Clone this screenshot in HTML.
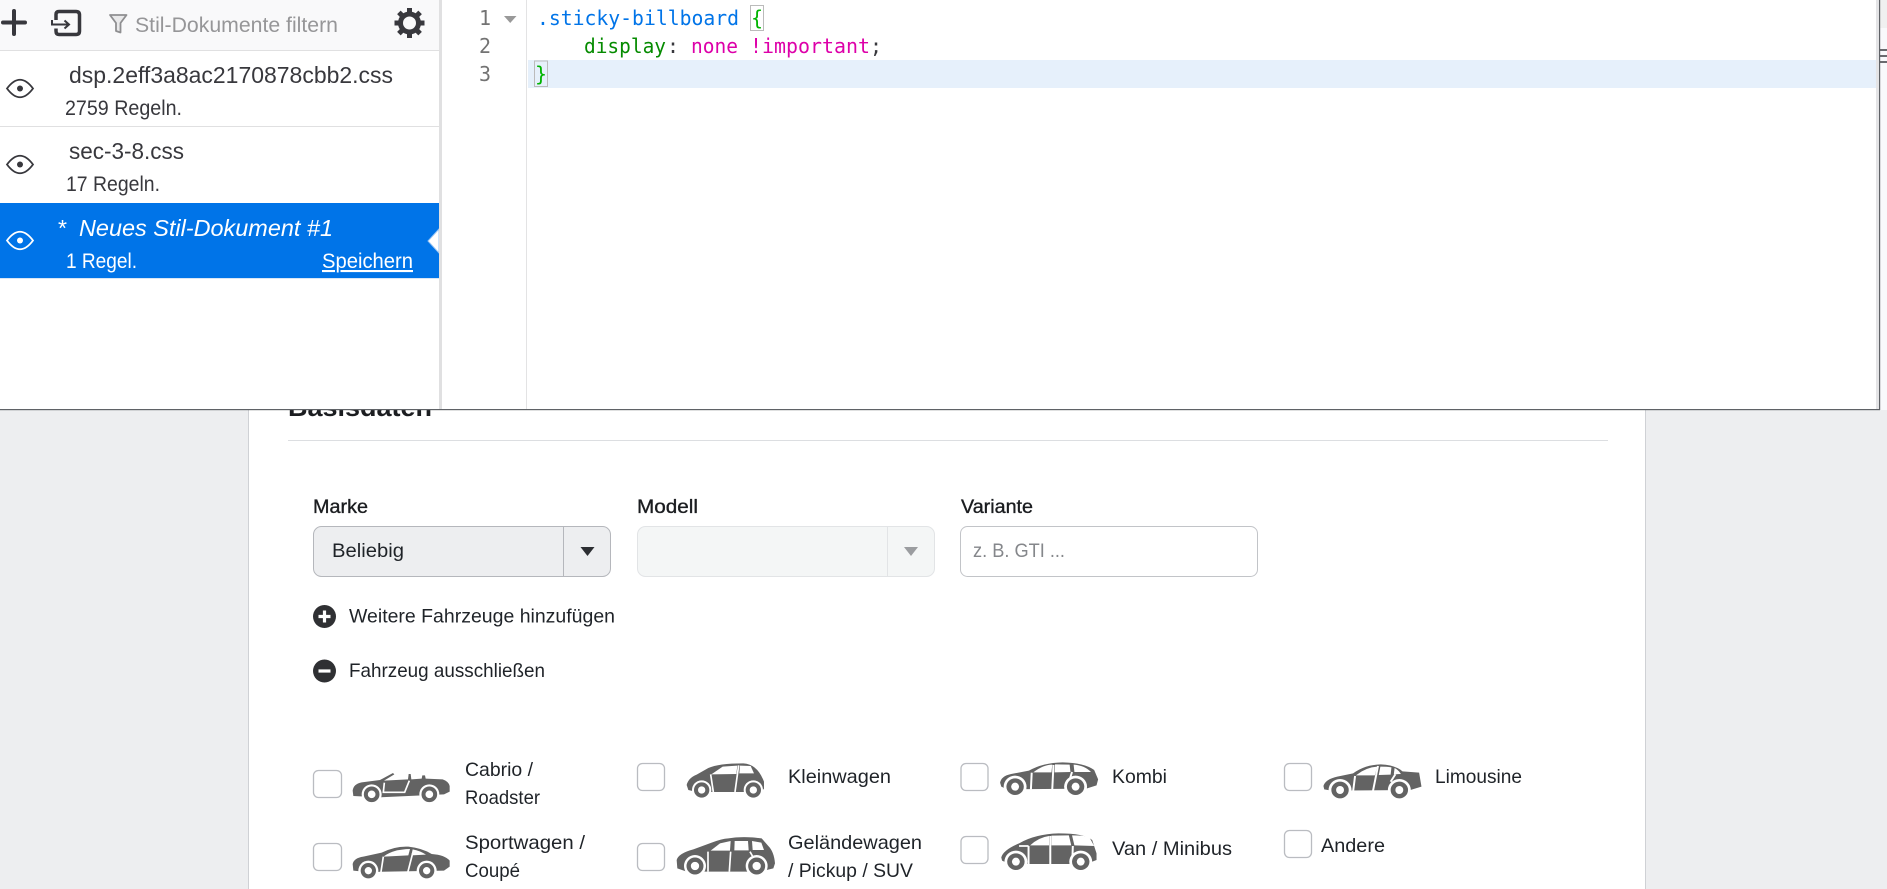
<!DOCTYPE html>
<html lang="de">
<head>
<meta charset="utf-8">
<title>Stil-Bearbeitung</title>
<style>
html,body{margin:0;padding:0;width:1887px;height:889px;overflow:hidden;background:#edeef0}
svg{display:block;position:absolute;left:0;top:0}
text{font-family:"Liberation Sans",sans-serif}
text.m{font-family:"DejaVu Sans Mono","Liberation Mono",monospace;font-size:20px}
.s{font-size:19.5px;fill:#1f2328}
.l{font-size:19px;fill:#1b1d20;stroke:#1b1d20;stroke-width:.35}
.u{font-size:23px;fill:#38383d}
.r{font-size:21px;fill:#38383d}
.b{fill:#636363}
.w{fill:#fff}
</style>
</head>
<body>
<svg width="1887" height="889" viewBox="0 0 1887 889" xmlns="http://www.w3.org/2000/svg">
<!-- page -->
<rect x="0" y="0" width="1887" height="889" fill="#edeef0"/>
<rect x="248" y="0" width="1398" height="889" fill="#fff"/>
<rect x="248" y="0" width="1" height="889" fill="#cfd1d5"/>
<rect x="1645" y="0" width="1" height="889" fill="#cfd1d5"/>
<text x="288" y="416" font-size="26" font-weight="700" fill="#1b1d20" textLength="144" lengthAdjust="spacingAndGlyphs">Basisdaten</text>
<rect x="288" y="440" width="1320" height="1" fill="#dcdee1"/>

<text class="l" x="313" y="513" textLength="55" lengthAdjust="spacingAndGlyphs">Marke</text>
<text class="l" x="637" y="513" textLength="61" lengthAdjust="spacingAndGlyphs">Modell</text>
<text class="l" x="961" y="513" textLength="72" lengthAdjust="spacingAndGlyphs">Variante</text>

<rect x="313.5" y="526.5" width="297" height="50" rx="8" fill="#edeef0" stroke="#b5b7bc"/>
<rect x="563" y="527" width="1" height="49" fill="#b5b7bc"/>
<path d="M580.5 547H594.5L587.5 556Z" fill="#2c2e32"/>
<text class="s" x="332" y="557" textLength="72" lengthAdjust="spacingAndGlyphs" fill="#2a2c30">Beliebig</text>

<rect x="637.5" y="526.5" width="297" height="50" rx="8" fill="#f4f6f6" stroke="#e2e4e6"/>
<rect x="887" y="527" width="1" height="49" fill="#e2e4e6"/>
<path d="M904 547H918L911 556Z" fill="#9b9da0"/>

<rect x="960.5" y="526.5" width="297" height="50" rx="7" fill="#fff" stroke="#c2c4c8"/>
<text x="973" y="557" font-size="19.500" fill="#85878b" textLength="92" lengthAdjust="spacingAndGlyphs">z. B. GTI ...</text>

<circle cx="324.5" cy="616.5" r="11.5" fill="#2f3033"/>
<path d="M324.5 610.5V622.5M318.5 616.5H330.5" stroke="#fff" stroke-width="3.2" fill="none"/>
<text class="s" x="349" y="622.5" textLength="266" lengthAdjust="spacingAndGlyphs">Weitere Fahrzeuge hinzufügen</text>
<circle cx="324.5" cy="671" r="11.5" fill="#2f3033"/>
<path d="M318.5 671H330.5" stroke="#fff" stroke-width="3.2" fill="none"/>
<text class="s" x="349" y="677" textLength="196" lengthAdjust="spacingAndGlyphs">Fahrzeug ausschließen</text>

<!-- checkboxes -->
<g fill="#fff" stroke="#babcc1" stroke-width="1.3">
<rect x="313.5" y="770.5" width="28" height="27" rx="5"/>
<rect x="313.5" y="843.5" width="28" height="27" rx="5"/>
<rect x="637.5" y="763.5" width="27" height="27" rx="5"/>
<rect x="637.5" y="843.5" width="27" height="27" rx="5"/>
<rect x="961" y="763.5" width="27" height="27" rx="5"/>
<rect x="961" y="836.5" width="27" height="27" rx="5"/>
<rect x="1284.5" y="763.5" width="27" height="27" rx="5"/>
<rect x="1284.5" y="830.5" width="27" height="27" rx="5"/>
</g>

<!-- cars in first zoom coordinates -->
<g transform="translate(300 740) scale(.33333)">
 <!-- Cabrio -->
 <path class="b" d="M158 152Q160 132 185 127L240 120L279 99L283 103L252 122L324 118L326 102L332 102L334 118L365 116L367 106L375 106L377 116L428 118Q446 124 449 138L449 155L432 163L240 172L160 168Z"/>
 <path d="M253 128L250 157L314 157L328 122" fill="none" stroke="#fff" stroke-width="5"/>
 <circle cx="215" cy="163" r="30" fill="#fff"/><circle cx="215" cy="163" r="17.500" fill="#fff" stroke="#636363" stroke-width="12"/>
 <circle cx="388" cy="163" r="30" fill="#fff"/><circle cx="388" cy="163" r="17.500" fill="#fff" stroke="#636363" stroke-width="12"/>
 <!-- Sportwagen -->
 <path class="b" d="M158 372Q162 354 190 350L245 338Q285 318 325 320Q365 324 395 342Q435 345 449 362L449 380L432 392L200 396L160 392Z"/>
 <path d="M253 348Q280 328 330 327L325 346L252 350Z" fill="#fff"/>
 <path d="M338 328Q360 332 378 344L334 346Z" fill="#fff"/>
 <path d="M250 350L242 402M338 340L322 402" fill="none" stroke="#fff" stroke-width="5"/>
 <circle cx="205" cy="392" r="30" fill="#fff"/><circle cx="205" cy="392" r="17" fill="#fff" stroke="#636363" stroke-width="12"/>
 <circle cx="380" cy="392" r="30" fill="#fff"/><circle cx="380" cy="392" r="17" fill="#fff" stroke="#636363" stroke-width="12"/>
 <!-- Kleinwagen -->
 <path class="b" d="M1160 135Q1165 114 1190 104L1225 84Q1255 70 1330 70Q1372 72 1392 125L1392 146Q1385 156 1370 156L1190 156L1165 150Z"/>
 <path d="M1234 103L1268 80L1312 77L1309 102Z" fill="#fff"/>
 <path d="M1320 77L1352 78L1362 100L1318 100Z" fill="#fff"/>
 <path d="M1232 103L1240 156M1316 76L1305 156" fill="none" stroke="#fff" stroke-width="5"/>
 <circle cx="1205" cy="150" r="29" fill="#fff"/><circle cx="1205" cy="150" r="17" fill="#fff" stroke="#636363" stroke-width="12"/>
 <circle cx="1360" cy="150" r="29" fill="#fff"/><circle cx="1360" cy="150" r="17" fill="#fff" stroke="#636363" stroke-width="12"/>
 <!-- Gelaendewagen -->
 <path class="b" d="M1130 360Q1135 340 1180 328L1235 308Q1265 296 1285 295Q1330 288 1385 295L1405 318Q1422 335 1425 370L1420 385L1380 395L1160 395L1132 385Z"/>
 <path d="M1285 292Q1335 286 1380 292" fill="none" stroke="#fff" stroke-width="3"/>
 <path d="M1232 332L1260 310L1292 303L1290 332Z" fill="#fff"/>
 <path d="M1304 303L1344 303L1346 331L1303 331Z" fill="#fff"/>
 <path d="M1356 303L1384 308L1392 330L1358 330Z" fill="#fff"/>
 <path d="M1224 335L1224 395M1292 335L1288 395M1350 335L1364 360" fill="none" stroke="#fff" stroke-width="5"/>
 <circle cx="1185" cy="378" r="33" fill="#fff"/><circle cx="1185" cy="378" r="19" fill="#fff" stroke="#636363" stroke-width="13"/>
 <circle cx="1370" cy="378" r="33" fill="#fff"/><circle cx="1370" cy="378" r="19" fill="#fff" stroke="#636363" stroke-width="13"/>
</g>

<g transform="translate(940 740) scale(.3953 .33333)">
 <!-- Kombi -->
 <path class="b" d="M152 128Q155 108 180 102L225 92Q260 68 310 67Q365 68 390 90L400 118L396 136L370 146L170 148L155 140Z"/>
 <path d="M236 97Q262 74 284 74L282 97Z" fill="#fff"/>
 <path d="M291 73L328 74L330 96L290 97Z" fill="#fff"/>
 <path d="M338 74Q365 76 382 96L340 96Z" fill="#fff"/>
 <path d="M232 98L230 148M287 75L284 148M334 96L325 130" fill="none" stroke="#fff" stroke-width="5"/>
 <ellipse cx="190" cy="140" rx="29" ry="33" fill="#fff"/><ellipse cx="190" cy="140" rx="22" ry="25" class="b"/><ellipse cx="190" cy="140" rx="10" ry="12" fill="#fff"/>
 <ellipse cx="343" cy="140" rx="29" ry="33" fill="#fff"/><ellipse cx="343" cy="140" rx="22" ry="25" class="b"/><ellipse cx="343" cy="140" rx="10" ry="12" fill="#fff"/>
 <!-- Limousine -->
 <path class="b" d="M970 138Q975 118 1005 110L1045 100Q1075 74 1115 73Q1150 74 1170 94L1212 98L1218 140L1190 150L990 152L972 148Z"/>
 <path d="M1052 106Q1078 82 1106 80L1100 106Z" fill="#fff"/>
 <path d="M1114 80Q1130 80 1142 82L1140 104L1110 105Z" fill="#fff"/>
 <path d="M1150 84Q1160 90 1166 102L1148 103Z" fill="#fff"/>
 <path d="M1050 108L1045 155M1108 78L1095 155M1152 103L1140 125" fill="none" stroke="#fff" stroke-width="5"/>
 <ellipse cx="1012" cy="150" rx="29" ry="33" fill="#fff"/><ellipse cx="1012" cy="150" rx="22" ry="25" class="b"/><ellipse cx="1012" cy="150" rx="10" ry="12" fill="#fff"/>
 <ellipse cx="1162" cy="150" rx="29" ry="33" fill="#fff"/><ellipse cx="1162" cy="150" rx="22" ry="25" class="b"/><ellipse cx="1162" cy="150" rx="10" ry="12" fill="#fff"/>
 <!-- Van -->
 <path class="b" d="M155 352Q160 330 200 310Q240 282 300 280Q365 280 385 300L396 340L396 360L370 372L175 372L157 362Z"/>
 <path d="M228 316Q250 292 276 288L276 316Z" fill="#fff"/>
 <path d="M282 287L326 286L332 316L282 316Z" fill="#fff"/>
 <path d="M334 286Q366 286 378 292L390 318L340 316Z" fill="#fff"/>
 <path d="M224 318L224 372M279 288L279 372M336 318L335 355M200 318L224 318" fill="none" stroke="#fff" stroke-width="5"/>
 <ellipse cx="192" cy="365" rx="29" ry="33" fill="#fff"/><ellipse cx="192" cy="365" rx="22" ry="25" class="b"/><ellipse cx="192" cy="365" rx="10" ry="12" fill="#fff"/>
 <ellipse cx="356" cy="365" rx="29" ry="33" fill="#fff"/><ellipse cx="356" cy="365" rx="22" ry="25" class="b"/><ellipse cx="356" cy="365" rx="10" ry="12" fill="#fff"/>
</g>

<!-- labels -->
<g>
<text class="s" x="465" y="776" textLength="68" lengthAdjust="spacingAndGlyphs">Cabrio /</text>
<text class="s" x="465" y="804" textLength="75" lengthAdjust="spacingAndGlyphs">Roadster</text>
<text class="s" x="465" y="849" textLength="120" lengthAdjust="spacingAndGlyphs">Sportwagen /</text>
<text class="s" x="465" y="877" textLength="55" lengthAdjust="spacingAndGlyphs">Coupé</text>
<text class="s" x="788" y="783" textLength="103" lengthAdjust="spacingAndGlyphs">Kleinwagen</text>
<text class="s" x="788" y="849" textLength="134" lengthAdjust="spacingAndGlyphs">Geländewagen</text>
<text class="s" x="788" y="877" textLength="125" lengthAdjust="spacingAndGlyphs">/ Pickup / SUV</text>
<text class="s" x="1112" y="783" textLength="55" lengthAdjust="spacingAndGlyphs">Kombi</text>
<text class="s" x="1112" y="855" textLength="120" lengthAdjust="spacingAndGlyphs">Van / Minibus</text>
<text class="s" x="1435" y="783" textLength="87" lengthAdjust="spacingAndGlyphs">Limousine</text>
<text class="s" x="1321" y="852" textLength="64" lengthAdjust="spacingAndGlyphs">Andere</text>
</g>

<!-- right strip beside the panel -->
<rect x="1880" y="0" width="7" height="28" fill="#f0f0f0"/>
<rect x="1880" y="28" width="7" height="382" fill="#f9f9fb"/>
<rect x="1880" y="49" width="7" height="2" fill="#6a6a6e"/>
<rect x="1880" y="55" width="7" height="2" fill="#6a6a6e"/>
<rect x="1880" y="61" width="7" height="2" fill="#6a6a6e"/>
<rect x="1880" y="410" width="7" height="479" fill="#edeef0"/>

<!-- devtools panel -->
<rect x="0" y="0" width="1879" height="409" fill="#fff"/>
<rect x="0" y="409" width="1880" height="1.2" fill="#5f6266"/>
<rect x="1879" y="0" width="1.2" height="410" fill="#5f6266"/>
<rect x="1876" y="0" width="3" height="409" fill="#e4e4e6"/>
<rect x="439" y="0" width="3" height="409" fill="#e0e0e1"/>
<rect x="526" y="0" width="1" height="409" fill="#e3e3e4"/>

<!-- toolbar -->
<rect x="0" y="0" width="439" height="50" fill="#f9f9fa"/>
<rect x="0" y="50" width="439" height="1" fill="#e0e0e1"/>
<path d="M14 11V34M3 22.500H25" stroke="#38383d" stroke-width="4" stroke-linecap="round" fill="none"/>
<path d="M56 20V14.500Q56 11.500 59 11.500H76Q79.500 11.500 79.500 15V31Q79.500 34.500 76 34.500H59Q56 34.500 56 31V28.500" fill="none" stroke="#38383d" stroke-width="3.500"/>
<path d="M52 20V24.500H69M64.500 20.500L69 24.500L64.500 28.500" fill="none" stroke="#38383d" stroke-width="2"/>
<path d="M110 15H126.500L120.500 23V32.500L116 31V23Z" fill="#e9e9ea" stroke="#8f8f91" stroke-width="1.800" stroke-linejoin="round"/>
<text x="135" y="32" font-size="21.500" fill="#969698" textLength="203" lengthAdjust="spacingAndGlyphs">Stil-Dokumente filtern</text>
<g transform="translate(409.500 23)" stroke="#38383d" fill="none">
 <circle r="9" stroke-width="5"/>
 <path d="M0-15V-9.500M0 15V9.500M-15 0H-9.500M15 0H9.500M-10.600-10.600L-6.700-6.700M10.600 10.600L6.700 6.700M-10.600 10.600L-6.700 6.700M10.600-10.600L6.700-6.700" stroke-width="5"/>
</g>

<!-- list -->
<rect x="0" y="126" width="439" height="1" fill="#e0e0e1"/>
<rect x="0" y="203" width="439" height="75" fill="#0074e8"/>
<rect x="0" y="278" width="439" height="1" fill="#d8e6f6"/>
<g fill="none" stroke="#38383d" stroke-width="1.800">
 <path d="M7 88.500Q20 71 33 88.500Q20 106 7 88.500Z"/>
 <path d="M7 164.500Q20 147 33 164.500Q20 182 7 164.500Z"/>
</g>
<circle cx="20" cy="88.500" r="3" fill="#38383d"/>
<circle cx="20" cy="164.500" r="3" fill="#38383d"/>
<path d="M7 240.500Q20 223 33 240.500Q20 258 7 240.500Z" fill="none" stroke="#fff" stroke-width="1.800"/>
<circle cx="20" cy="240.500" r="3" fill="#fff"/>

<text class="u" x="69" y="83" textLength="324" lengthAdjust="spacingAndGlyphs">dsp.2eff3a8ac2170878cbb2.css</text>
<text class="r" x="65" y="115" textLength="117" lengthAdjust="spacingAndGlyphs">2759 Regeln.</text>
<text class="u" x="69" y="159" textLength="115" lengthAdjust="spacingAndGlyphs">sec-3-8.css</text>
<text class="r" x="66" y="191" textLength="94" lengthAdjust="spacingAndGlyphs">17 Regeln.</text>
<text x="58" y="236" font-size="23" fill="#fff" textLength="9" lengthAdjust="spacingAndGlyphs">*</text>
<text x="79" y="236" font-size="23" font-style="italic" fill="#fff" textLength="254" lengthAdjust="spacingAndGlyphs">Neues Stil-Dokument #1</text>
<text x="66" y="268" font-size="21" fill="#fff" textLength="71" lengthAdjust="spacingAndGlyphs">1 Regel.</text>
<text x="322" y="268" font-size="21" fill="#fff" text-decoration="underline" textLength="91" lengthAdjust="spacingAndGlyphs">Speichern</text>
<path d="M439 229L428 241L439 253Z" fill="#fff" stroke="#9cc6f3" stroke-width="1"/>
<rect x="439" y="228" width="3" height="26" fill="#e0e0e1"/>

<!-- editor -->
<rect x="528" y="60" width="1348" height="28" fill="#e6f0fb"/>
<text class="m" x="479" y="25" fill="#737373" textLength="11">1</text>
<text class="m" x="479" y="53" fill="#737373" textLength="11">2</text>
<text class="m" x="479" y="81" fill="#737373" textLength="11">3</text>
<path d="M504 16H516.500L510.200 23Z" fill="#999"/>
<text class="m" x="537" y="25" fill="#0074e8" textLength="202" lengthAdjust="spacingAndGlyphs">.sticky-billboard</text>
<rect x="750.500" y="5.500" width="13" height="25" fill="#fff" stroke="#bbb"/>
<text class="m" x="751" y="25" fill="#00b400">{</text>
<text class="m" x="584" y="53" fill="#058b00" textLength="82" lengthAdjust="spacingAndGlyphs">display</text>
<text class="m" x="667" y="53" fill="#38383d">:</text>
<text class="m" x="691" y="53" fill="#dd00a9" textLength="47" lengthAdjust="spacingAndGlyphs">none</text>
<text class="m" x="750" y="53" fill="#dd00a9" textLength="120" lengthAdjust="spacingAndGlyphs">!important</text>
<text class="m" x="870" y="53" fill="#38383d">;</text>
<rect x="534.500" y="61" width="13" height="25.500" fill="#e6f0fb" stroke="#bbb"/>
<text class="m" x="535" y="81" fill="#00b400">}</text>
</svg>
</body>
</html>
